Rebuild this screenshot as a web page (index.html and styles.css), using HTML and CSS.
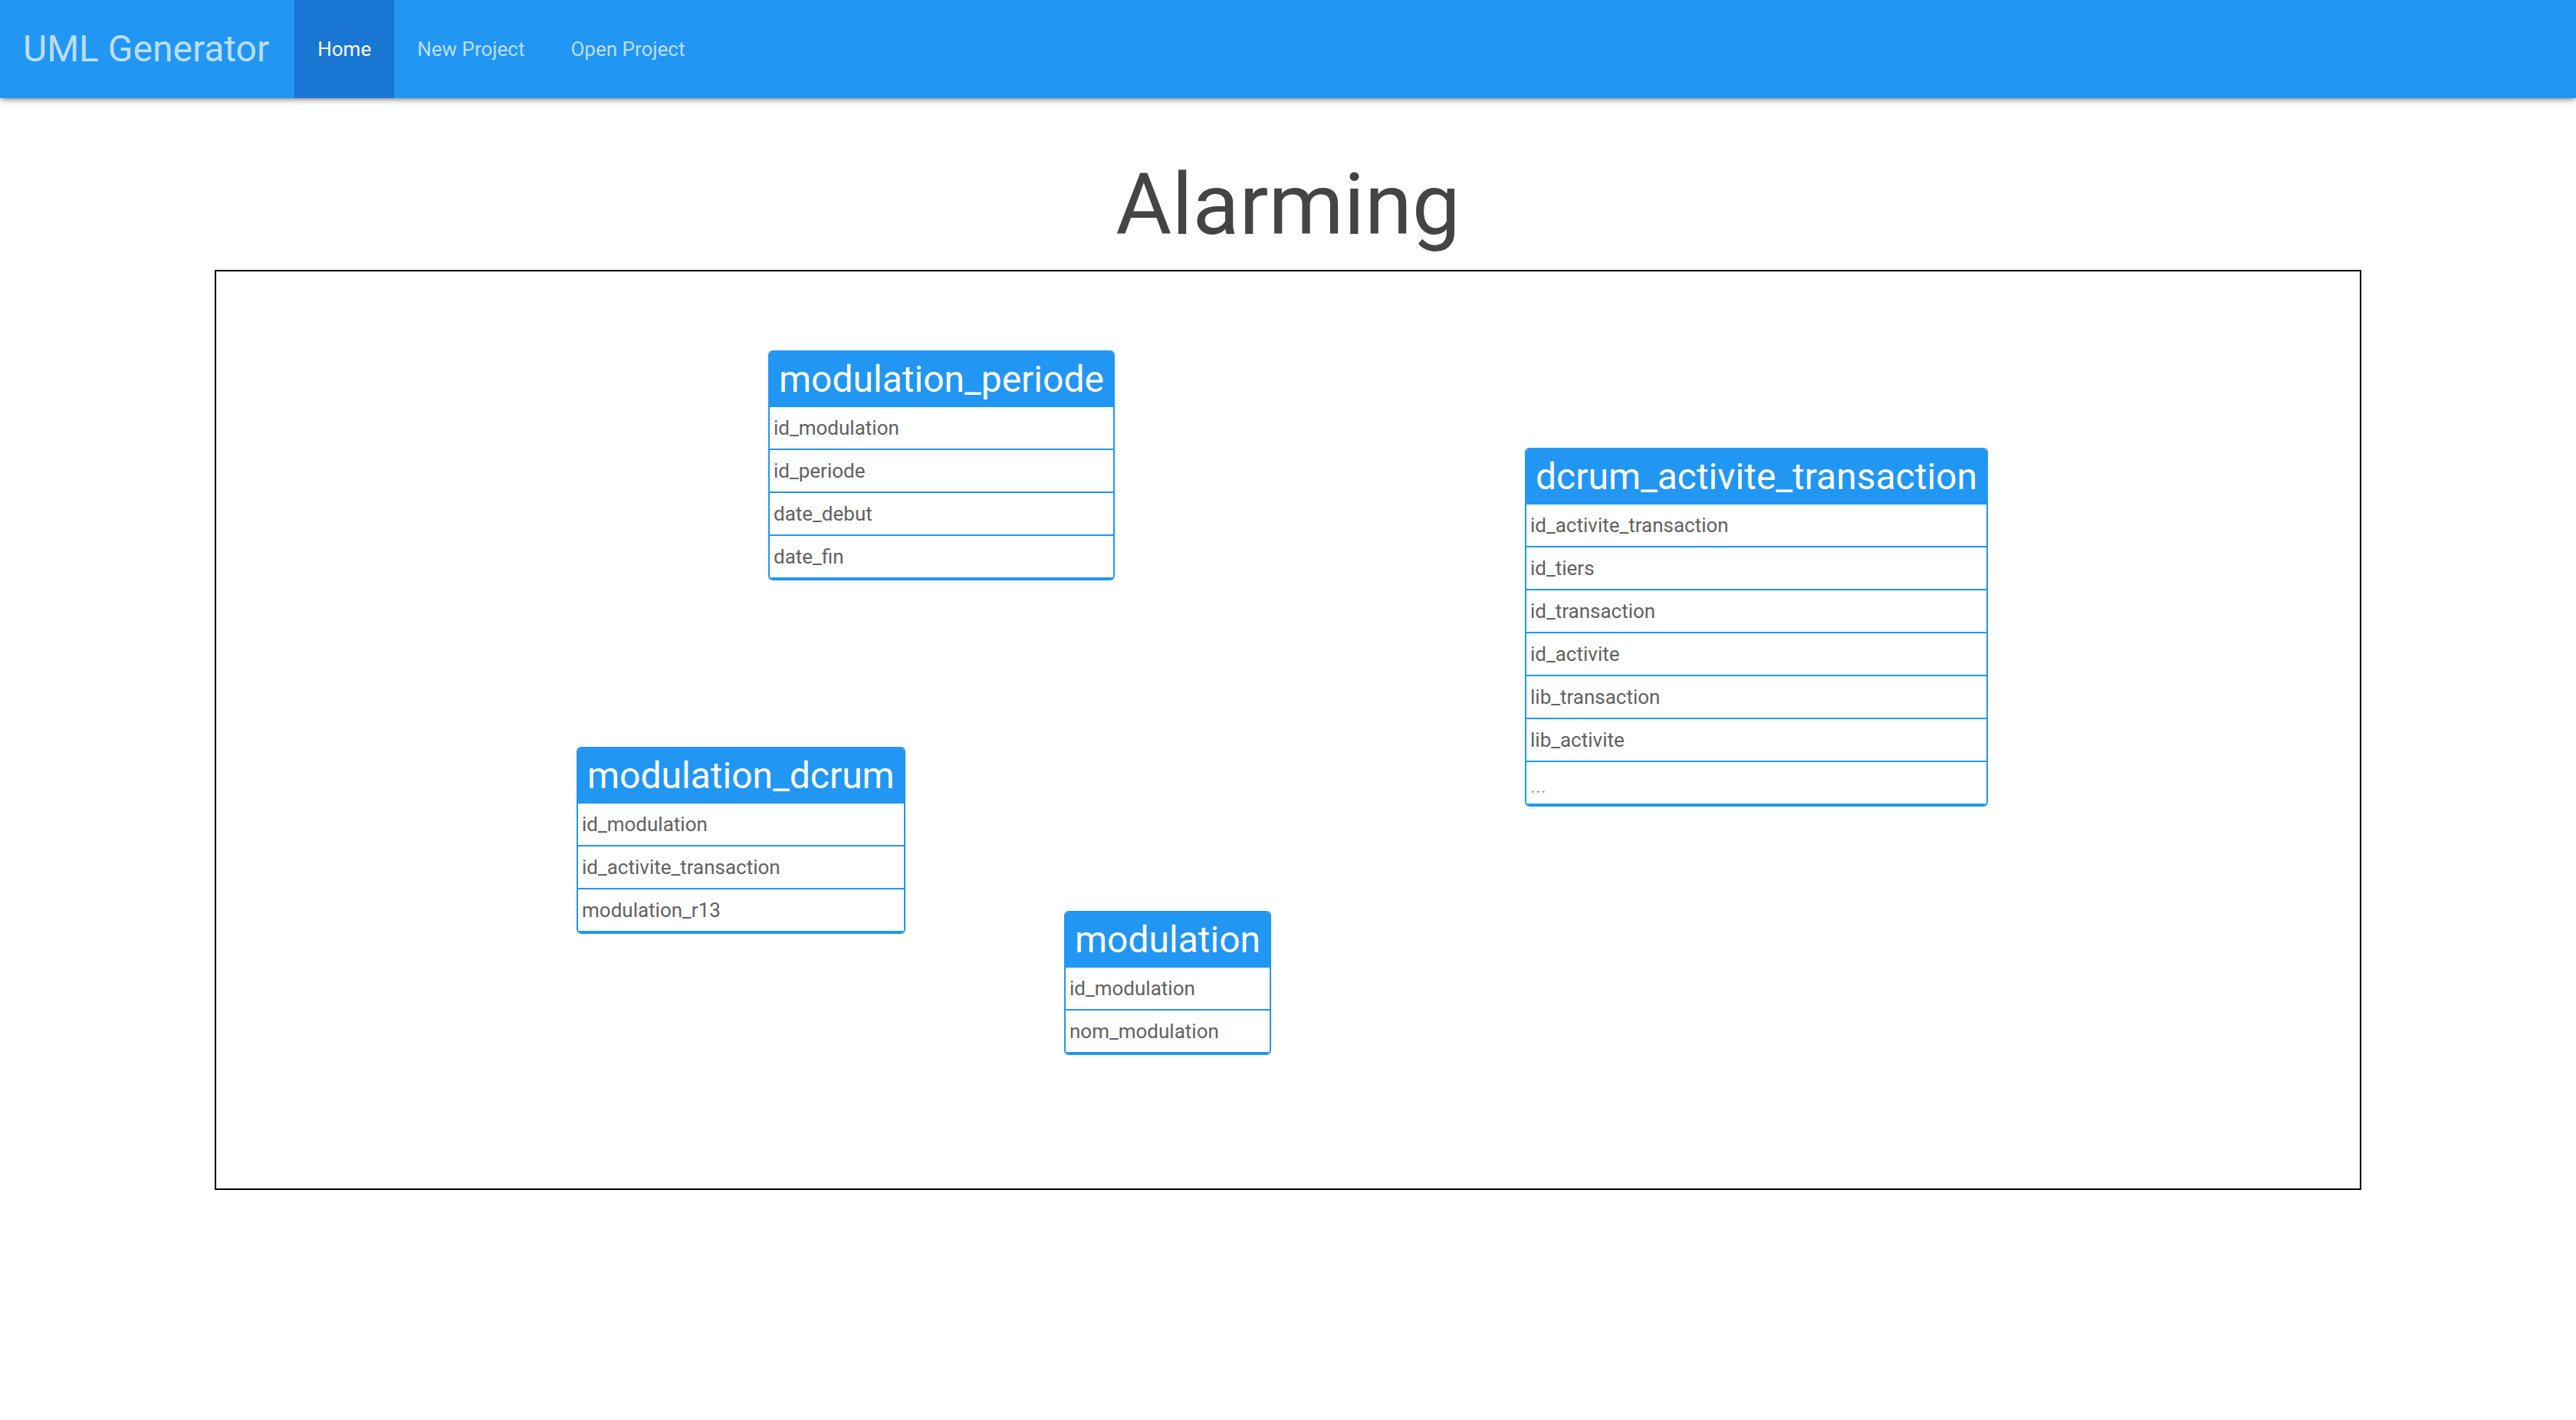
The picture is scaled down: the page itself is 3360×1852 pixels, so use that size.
FILE: index.html
```html
<!DOCTYPE html>
<html lang="en">
<head>
<meta charset="utf-8">
<title>UML Generator</title>
<link rel="stylesheet" href="styles.css">
</head>
<body>
<nav class="navbar">
  <a class="brand" href="#">UML Generator</a>
  <ul class="nav-links">
    <li class="active"><a href="#">Home</a></li>
    <li><a href="#">New Project</a></li>
    <li><a href="#">Open Project</a></li>
  </ul>
</nav>
<main class="page">
  <h1 class="title">Alarming</h1>
  <div class="canvas">
    <div class="entity" style="left:720px;top:103px">
      <div class="entity-head">modulation_periode</div>
      <div class="field">id_modulation</div>
      <div class="field">id_periode</div>
      <div class="field">date_debut</div>
      <div class="field">date_fin</div>
    </div>
    <div class="entity" style="left:1707px;top:230px">
      <div class="entity-head">dcrum_activite_transaction</div>
      <div class="field">id_activite_transaction</div>
      <div class="field">id_tiers</div>
      <div class="field">id_transaction</div>
      <div class="field">id_activite</div>
      <div class="field">lib_transaction</div>
      <div class="field">lib_activite</div>
      <div class="field more">...</div>
    </div>
    <div class="entity" style="left:470px;top:620px">
      <div class="entity-head">modulation_dcrum</div>
      <div class="field">id_modulation</div>
      <div class="field">id_activite_transaction</div>
      <div class="field">modulation_r13</div>
    </div>
    <div class="entity" style="left:1106px;top:834px">
      <div class="entity-head">modulation</div>
      <div class="field">id_modulation</div>
      <div class="field">nom_modulation</div>
    </div>
  </div>
</main>
</body>
</html>
```

FILE: styles.css
```css
* { box-sizing: border-box; }

html, body {
  margin: 0;
  padding: 0;
  background: #ffffff;
  font-family: Roboto, "Noto Sans", "Liberation Sans", sans-serif;
}

.navbar {
  display: flex;
  align-items: stretch;
  height: 128px;
  background: #2196f3;
  box-shadow: 0 4px 4px 0 rgba(0,0,0,0.14), 0 6px 2px -4px rgba(0,0,0,0.12), 0 2px 10px 0 rgba(0,0,0,0.2);
  position: relative;
  z-index: 2;
}

.brand {
  display: block;
  padding: 0 33px 0 30px;
  font-size: 48px;
  line-height: 128px;
  color: #bbdefb;
  text-decoration: none;
}

.nav-links {
  display: flex;
  margin: 0;
  padding: 0;
  list-style: none;
}

.nav-links li a {
  display: block;
  padding: 0 30px;
  font-size: 26px;
  line-height: 128px;
  color: #bbdefb;
  text-decoration: none;
}

.nav-links li.active a {
  background: #1976d2;
  color: #ffffff;
}

.page {
  padding-top: 77px;
}

.title {
  margin: 0 0 24px;
  text-align: center;
  font-size: 112px;
  line-height: 123px;
  font-weight: 400;
  color: #444444;
}

.canvas {
  position: relative;
  width: 2800px;
  height: 1200px;
  margin: 0 auto;
  border: 2px solid #000000;
}

.entity {
  position: absolute;
  display: inline-block;
  border: 2px solid #2196f3;
  border-radius: 6px;
  overflow: hidden;
  background: #ffffff;
}

.entity-head {
  height: 72px;
  padding: 0 12px;
  background: #2196f3;
  color: #ffffff;
  font-size: 48px;
  line-height: 72px;
  text-align: center;
  white-space: nowrap;
}

.field {
  height: 56px;
  padding-left: 5px;
  border-bottom: 2px solid #2196f3;
  font-size: 26px;
  line-height: 54px;
  color: #616161;
  white-space: nowrap;
}

.field.more {
  color: #9e9e9e;
  line-height: 62px;
}
```
